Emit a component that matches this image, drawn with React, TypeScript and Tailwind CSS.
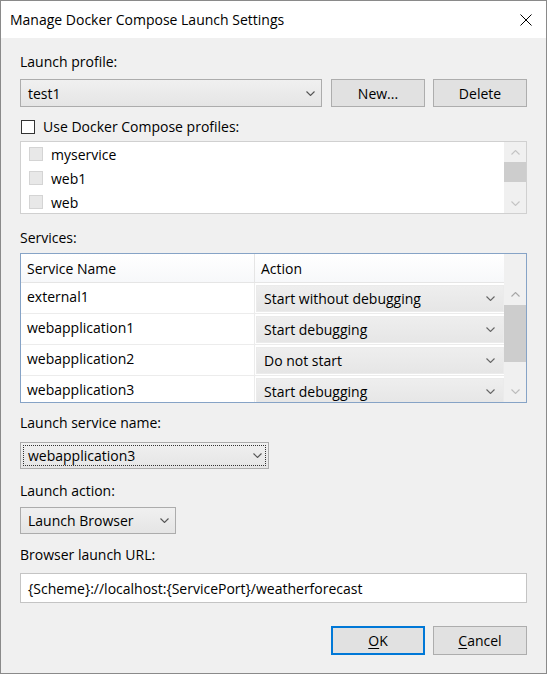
import React from "react";

const Chevron = ({ c = "#555" }: { c?: string }) => (
  <svg width="9" height="5" viewBox="0 0 9 5">
    <path d="M0.5 0.5 L4.5 4.5 L8.5 0.5" fill="none" stroke={c} strokeWidth="1.1" />
  </svg>
);
const Up = ({ c = "#999" }: { c?: string }) => (
  <svg width="9" height="5" viewBox="0 0 9 5">
    <path d="M0.5 4.5 L4.5 0.5 L8.5 4.5" fill="none" stroke={c} strokeWidth="1.1" />
  </svg>
);

function Combo({ text, w, h, focus }: { text: string; w: string; h: string; focus?: boolean }) {
  return (
    <div
      className={`${w} ${h} relative flex items-center justify-between border border-[#acacac] bg-gradient-to-b from-[#f0f0f0] to-[#e5e5e5] pl-[7px] pr-[6px]`}
    >
      {focus && (
        <div className="absolute inset-[2px] border border-dotted border-[#333]" />
      )}
      <span>{text}</span>
      <Chevron />
    </div>
  );
}

function Btn({ children, def }: { children: React.ReactNode; def?: boolean }) {
  return (
    <div
      className={`w-[94px] h-full flex items-center justify-center bg-[#e1e1e1] border ${
        def ? "border-[#0078d7] shadow-[inset_0_0_0_1px_#0078d7]" : "border-[#adadad]"
      }`}
    >
      {children}
    </div>
  );
}

const services = [
  ["external1", "Start without debugging"],
  ["webapplication1", "Start debugging"],
  ["webapplication2", "Do not start"],
  ["webapplication3", "Start debugging"],
];

export default function App() {
  return (
    <div className="w-[547px] h-[674px] border border-[#8a8a8a] bg-[#f0f0f0] flex flex-col text-[14px] leading-[19px] text-black font-['Open_Sans','Noto_Sans',sans-serif]">
      {/* Title bar */}
      <div className="h-[37px] bg-white flex items-center justify-between pl-[9px] pr-[14px]">
        <span>Manage Docker Compose Launch Settings</span>
        <svg width="12" height="12" viewBox="0 0 12 12">
          <path d="M0.5 0.5 L11.5 11.5 M11.5 0.5 L0.5 11.5" stroke="#000" strokeWidth="1" />
        </svg>
      </div>

      <div className="flex flex-col px-[19px] pt-[14px]">
        <div>Launch profile:</div>
        <div className="mt-[8px] h-[28px] flex">
          <Combo text="test1" w="w-[302px]" h="h-[28px]" />
          <div className="ml-[9px] h-full">
            <Btn>New...</Btn>
          </div>
          <div className="ml-[8px] h-full">
            <Btn>Delete</Btn>
          </div>
        </div>

        <div className="mt-[10px] flex items-center">
          <div className="ml-[1px] w-[14px] h-[14px] border border-[#333] bg-white" />
          <span className="ml-[8px]">Use Docker Compose profiles:</span>
        </div>

        <div className="mt-[5px] h-[73px] border border-[#d0d0d0] bg-white flex overflow-hidden">
          <div className="flex-1 flex flex-col">
            {["myservice", "web1", "web"].map((s) => (
              <div key={s} className="h-[24px] shrink-0 flex items-center pl-[8px]">
                <div className="w-[14px] h-[14px] border border-[#d4d4d4] bg-[#e8e8e8]" />
                <span className="ml-[8px]">{s}</span>
              </div>
            ))}
          </div>
          <div className="w-[22px] bg-[#f0f0f0] flex flex-col">
            <div className="h-[20px] flex items-center justify-center">
              <Up c="#c4c4c4" />
            </div>
            <div className="h-[20px] bg-[#cdcdcd]" />
            <div className="flex-1" />
            <div className="h-[20px] flex items-center justify-center">
              <Chevron c="#c4c4c4" />
            </div>
          </div>
        </div>

        <div className="mt-[14px]">Services:</div>

        <div className="mt-[6px] h-[150px] border border-[#86a3c6] bg-white flex overflow-hidden">
          <div className="flex-1 flex flex-col">
            <div className="h-[29px] shrink-0 flex border-b border-[#e5e5e5] bg-gradient-to-b from-white to-[#f7f8fa]">
              <div className="w-[234px] border-r border-[#e5e5e5] flex items-center pl-[6px]">
                Service Name
              </div>
              <div className="flex-1 flex items-center pl-[6px]">Action</div>
            </div>
            {services.map(([n, a]) => (
              <div key={n} className="h-[31px] shrink-0 flex border-b border-[#ececec]">
                <div className="w-[234px] border-r border-[#ececec] pl-[6px] pt-[4px]">{n}</div>
                <div className="flex-1 pt-[2px] pb-[1px] pl-[1px]">
                  <div className="h-full flex items-center justify-between bg-gradient-to-b from-[#eeeeee] to-[#e6e6e6] border border-[#ebebeb] pl-[7px] pr-[8px]">
                    <span>{a}</span>
                    <Chevron c="#666" />
                  </div>
                </div>
              </div>
            ))}
          </div>
          <div className="w-[22px] bg-[#f0f0f0] flex flex-col">
            <div className="h-[29px] shrink-0" />
            <div className="h-[22px] shrink-0 flex items-center justify-center">
              <Up c="#a6a6a6" />
            </div>
            <div className="h-[57px] shrink-0 bg-[#cdcdcd]" />
            <div className="flex-1" />
            <div className="h-[22px] shrink-0 flex items-center justify-center">
              <Chevron c="#bcbcbc" />
            </div>
          </div>
        </div>

        <div className="mt-[10px]">Launch service name:</div>
        <div className="mt-[10px]">
          <Combo text="webapplication3" w="w-[249px]" h="h-[27px]" focus />
        </div>

        <div className="mt-[12px]">Launch action:</div>
        <div className="mt-[7px]">
          <Combo text="Launch Browser" w="w-[156px]" h="h-[27px]" />
        </div>

        <div className="mt-[11px]">Browser launch URL:</div>
        <div className="mt-[9px] h-[30px] border border-[#c4c4c4] bg-white flex items-center pl-[7px]">
          {"{Scheme}://localhost:{ServicePort}/weatherforecast"}
        </div>

        <div className="mt-[23px] h-[29px] flex justify-end gap-[8px]">
          <Btn def>
            <span>
              <span className="underline underline-offset-2">O</span>K
            </span>
          </Btn>
          <Btn>
            <span>
              <span className="underline underline-offset-2">C</span>ancel
            </span>
          </Btn>
        </div>
      </div>
    </div>
  );
}
